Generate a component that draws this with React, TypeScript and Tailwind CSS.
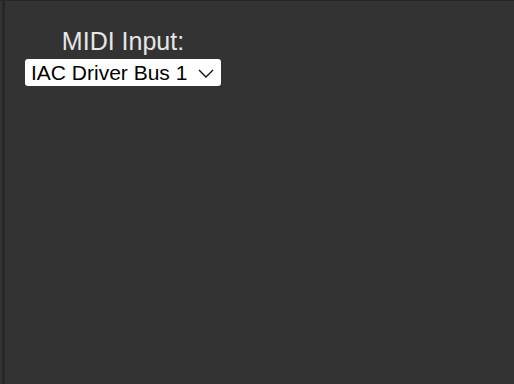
import { useState } from 'react';

function Chevron() {
  return (
    <svg width="16" height="9" viewBox="0 0 16 9" className="pointer-events-none absolute right-[7px] top-[10px]">
      <polyline points="1,1 8,8 15,1" fill="none" stroke="#111" strokeWidth="1.4" />
    </svg>
  );
}

export default function App() {
  const [port, setPort] = useState('IAC Driver Bus 1');

  return (
    <div
      className="flex h-screen w-full border-t border-[#262626] bg-[#333333] pl-[2px]"
      style={{ fontFamily: '"Liberation Sans", Arial, sans-serif' }}
    >
      <div className="flex flex-1 border-l-[3px] border-[#272727]">
        <div className="ml-[20px] mt-[25px] flex w-[196px] flex-col items-center">
          <label className="text-[25px] leading-[30px] text-[#e6e6e6]">MIDI Input:</label>
          <div className="relative mt-[3px] w-full">
            <select
              value={port}
              onChange={(e) => setPort(e.target.value)}
              className="h-[27px] w-full appearance-none rounded-[3px] bg-white pl-[6px] text-[21px] leading-[27px] text-black outline-none"
            >
              <option>IAC Driver Bus 1</option>
              <option>IAC Driver Bus 2</option>
            </select>
            <Chevron />
          </div>
        </div>
      </div>
    </div>
  );
}
